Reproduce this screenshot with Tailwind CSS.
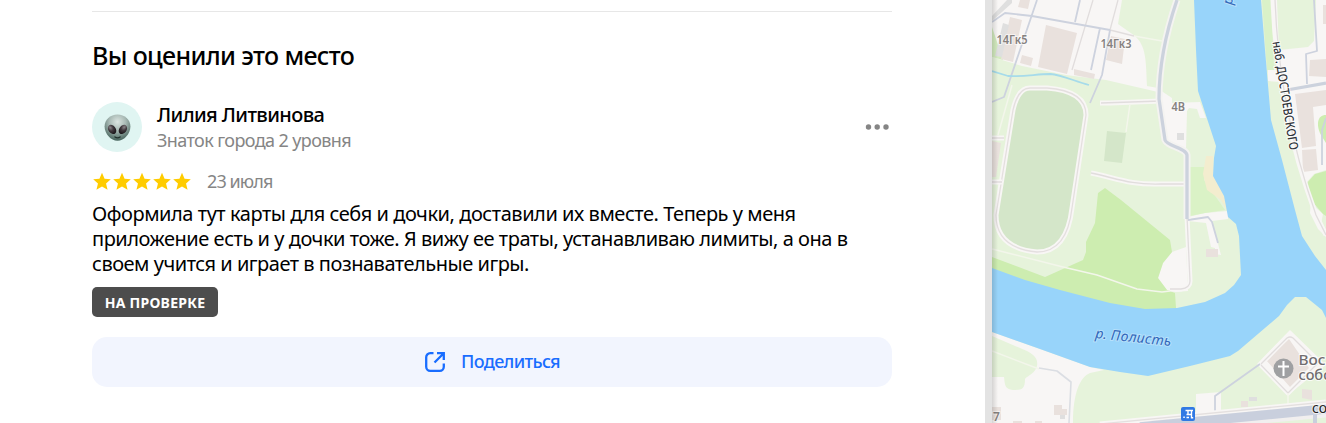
<!DOCTYPE html>
<html lang="ru">
	<head>
		<meta charset="UTF-8" />
		<meta name="viewport" content="width=device-width, initial-scale=1.0" />
		<title>Вы оценили это место</title>
		<script src="https://cdn.jsdelivr.net/npm/@tailwindcss/browser@4"></script>
	</head>
	<body class="flex h-[423px] w-[1326px] overflow-hidden bg-white font-['Noto_Sans',sans-serif] text-black">
		<!-- Review panel -->
		<main class="w-[985px] shrink-0 pl-[92px] pt-[11px]">
			<div class="w-[800px] border-t border-[#e7e7e7]">
				<h2 class="mt-[27px] whitespace-nowrap text-[25px] leading-8 font-medium tracking-[-0.62px]">Вы оценили это место</h2>

				<!-- Author -->
				<div class="mt-[31px] flex h-[50px] items-center">
					<div class="flex size-[50px] items-center justify-center rounded-full bg-[#e0f5f2]">
						<svg class="size-[27px]" viewBox="0 0 28 28">
							<defs>
								<radialGradient id="skin" cx="50%" cy="28%" r="70%">
									<stop offset="0" stop-color="#dce5e1" />
									<stop offset="0.45" stop-color="#a9bab5" />
									<stop offset="1" stop-color="#49675f" />
								</radialGradient>
								<radialGradient id="eye" cx="45%" cy="25%" r="70%">
									<stop offset="0" stop-color="#8b8589" />
									<stop offset="0.5" stop-color="#40383d" />
									<stop offset="1" stop-color="#1d181c" />
								</radialGradient>
							</defs>
							<path d="M14 .5C6.500.5 .6 6 .6 13c0 7.500 6.500 14.800 13.400 14.800S27.400 20.500 27.400 13C27.400 6 21.500.5 14 .5Z" fill="url(#skin)" />
							<ellipse cx="8.400" cy="16" rx="3.800" ry="5.200" transform="rotate(-38 8.400 16)" fill="url(#eye)" />
							<ellipse cx="19.600" cy="16" rx="3.800" ry="5.200" transform="rotate(38 19.600 16)" fill="url(#eye)" />
							<path d="M11.300 23.800q2.700 2 5.400 0" fill="none" stroke="#20302c" stroke-width="1.300" stroke-linecap="round" />
						</svg>
					</div>
					<div class="ml-[15px] grow whitespace-nowrap">
						<div class="text-[20px] leading-[26px] font-medium tracking-[-0.62px]">Лилия Литвинова</div>
						<div class="text-[18px] leading-[25px] tracking-[-0.6px] text-[#858585]">Знаток города 2 уровня</div>
					</div>
					<svg class="mr-[3px] h-[6px] w-[24px] fill-[#858585]" viewBox="0 0 24 6">
						<circle cx="3.500" cy="3" r="2.700" />
						<circle cx="12.200" cy="3" r="2.700" />
						<circle cx="21" cy="3" r="2.700" />
					</svg>
				</div>

				<!-- Rating -->
				<div class="mt-[17px] flex h-[25px] items-center">
					<svg class="h-[20px] w-[100px] fill-[#fc0]" viewBox="0 0 100 20">
						<defs>
							<path id="star" d="M10 .8l2.550 5.900 6.250.55-4.750 4.150 1.500 6.400L10 14.400l-5.550 3.400 1.500-6.400L1.200 7.250l6.250-.55Z" />
						</defs>
						<use href="#star" />
						<use href="#star" x="20" />
						<use href="#star" x="40" />
						<use href="#star" x="60" />
						<use href="#star" x="80" />
					</svg>
					<span class="ml-[15px] text-[18px] leading-[25px] tracking-[-0.9px] text-[#858585]">23 июля</span>
				</div>

				<p class="mt-[7px] whitespace-nowrap text-[20px] leading-[25px]">
					<span class="block tracking-[-0.45px]">Оформила тут карты для себя и дочки, доставили их вместе. Теперь у меня</span>
					<span class="block tracking-[-0.46px]">приложение есть и у дочки тоже. Я вижу ее траты, устанавливаю лимиты, а она в</span>
					<span class="block tracking-[-0.48px]">своем учится и играет в познавательные игры.</span>
				</p>

				<div class="mt-[11px] flex h-[30px] w-[126px] items-center justify-center rounded-[5px] bg-[#4d4d4d] text-[14px] font-bold tracking-[0.25px] whitespace-nowrap text-white">НА ПРОВЕРКЕ</div>

				<button class="mt-[20px] flex h-[50px] w-full items-center justify-center rounded-[15px] bg-[#f2f5fe] text-[#196dff]">
					<svg class="mr-[15px] size-[22px]" viewBox="0 0 22 22" fill="none" stroke="currentColor" stroke-width="2.300">
						<path d="M9.500 2.200H6.200a4 4 0 0 0-4 4v9.600a4 4 0 0 0 4 4h9.600a4 4 0 0 0 4-4v-3.300" />
						<path d="M10.500 11.500l9-9M13 2.200h6.800V9" />
					</svg>
					<span class="-mt-px text-[18px] font-medium tracking-[-0.65px]">Поделиться</span>
				</button>
			</div>
		</main>

		<div class="w-[7px] shrink-0 bg-[#e3e3e3]"></div>

		<!-- Map -->
		<svg class="h-[423px] w-[334px] shrink-0" viewBox="992 0 334 423" font-family="Noto Sans, sans-serif">
			<defs>
				<linearGradient id="edge">
					<stop offset="0" stop-color="#000" stop-opacity="0.14" />
					<stop offset="1" stop-color="#000" stop-opacity="0" />
				</linearGradient>
			</defs>
			<rect x="992" width="334" height="423" fill="#e6f3db" />

			<!-- Built-up land -->
			<g fill="#f8f6f5">
				<path d="M992 0H1122L1118 24 1135 36C1146 46 1146 60 1147 86L1158 88V92L1106 80 1066 75 1022 66 992 57Z" />
				<path d="M1160 90l12 8v5l28-1 6 16h-6l-3-9-8-1-2 3-1 38-18-7-9-44Z" />
				<path d="M1272 0h5l2 50 29-3 6-6 2-41h10v170l-12 4-8 9-16-50-9-51-13-1 0-11 10-1Z" />
				<path d="M992 332l48 17 50 18 14 3-14 3c-10 4-17 20-17 50h-81Z" />
				<path d="M1172 252l14-5 2 44-12 1-9-2-9-12 5-15ZM1188 217l17-4 23-2v8l-16 2 9 34-6-1 0-6-4-1-5-24-18-2Z" />
				<path d="M1290 330l36 35-12 9-26 21-31-31ZM1196 394l25-2v22h-25ZM1311 200l5 8 7 6-2 10 5 6v7l-8-8-8-16Z" />
			</g>
			<path d="M992 27L1003 60 992 57Z" fill="#d4ecc0" />
			<path d="M992 336l35 15c9 5 11 9 10 15-2 8-9 9-12 13 0 11-4 11-12 11-8-1-8-4-9-13H992Z" fill="#e6f3db" />

			<!-- Parks -->
			<path d="M992 257l53 20 38-17 3-8v-10l9-19 3-30 7-5 16 12 49 40 2 12-9 11-5 15 9 12 8 3 2 30h-80l-105-30Z" fill="#cdedb0" />
			<path d="M1190 167h17l-3 13 21 30-20 3-15 3Z" fill="#daf2c6" />
			<path d="M1206 156h7l1 19 11 23 3 14-7-12-14-10-4-16Z" fill="#f3edcf" />
			<path d="M1262 0h9l3 70h-7Z" fill="#daf1c8" />
			<path d="M1326 171l-11 3-8 9 4 17 12 14 3 2ZM1326 115c-9 0-10 10-5 20l5 8Z" fill="#cdedb0" />

			<!-- Buildings -->
			<g fill="#e9e1dd">
				<path d="M1020 0h10l-2 9-10-2ZM1010 17l12 3-9 42-12-3ZM1046 25l31 8-10 41-29-7ZM1022 55l11 3-2 8-11-3ZM1074 69l21 5-1 5-20-4ZM1111 36l14 3-3 25-16-4ZM992 141l9 2-5 34h-4ZM1323 5h3v19h-3ZM1310 60l16 -1v18l-17-1Z" />
				<path d="M1295 94l31-4v15l-13 2 3 39-14 2ZM1302 150l14-1 2 21-15 2ZM1206 249h12v8h-12ZM1266 360l23-21 20 29-19 19ZM1302 389l10 1v10l-10-2ZM1241 401h7v6h-7ZM992 407h9v13h-9ZM1054 405h8v4h5v6h-13ZM1013 421h9v2h-9ZM1035 421h7v2h-7Z" />
			</g>
			<path d="M992 16l15-16h5v3l-20 18ZM1003 23l6 2-7 32-7-1ZM1177 133h7v7h-7ZM1249 397h8v4h-8ZM1060 415h5v4h-5Z" fill="#dfdfdf" />

			<!-- Stadium -->
			<path d="M996 215L1013 110Q1018 88 1030 88H1047Q1086 91 1086 115L1072 208Q1067 252 1037 252 996 248 996 215Z" fill="#d4e6c9" stroke="#f8f6f5" stroke-width="5" />
			<path d="M996 215L1013 110Q1018 88 1030 88H1047Q1086 91 1086 115L1072 208Q1067 252 1037 252 996 248 996 215Z" fill="none" stroke="#e4dfdf" stroke-width="1.300" />
			<path d="M1107 131l19 2-4 30-18-2Z" fill="#d4e6c9" />

			<!-- Minor roads -->
			<g fill="none" stroke-linejoin="round">
				<path d="M1100 103h10l51-2M1091 173c25 5 38 12 70 11h25M992 138h12M992 182h10M1187 216l3 65q0 7-9 8h-11M1273 0q4 110 43 215l10 20M1261 364l29-30 28 29M1261 365l27 28 30-30" stroke="#f8f6f5" stroke-width="5" />
				<path d="M1101 103l60-2M1091 173c25 5 38 12 70 11h25M992 138h12M992 182h10M1187 216l3 65q0 7-9 8h-11M1275 0q4 110 41 215l10 20M1093 0l-21 70M1118 0l-8 30M1110 30l24 6M1261 364l26-26q3-2 6 0l25 25M1261 365l27 28 30-30" stroke="#e1dddd" stroke-width="1.300" />
				<path d="M992 249l71 18 34 8 40 14 25 3 8-1M992 351l47 18M1012 85l-14 50M1130 104l-4 28M1134 36l28 5M1288 393v15" stroke="#f3f6eb" stroke-width="1.500" />
				<path d="M992 22l13-9 27 3 78 14M1037 0l-33 97-12 5M1080 0l-5 22M1100 28l-9 42M1110 30l-8 45-12 28M1314 0l3 51-11 3 1 30M1322 165v-35l4-12M1188 220l20-3 4 5 6 21M1215 413v-17l45-32" stroke="#cdd2de" stroke-width="1.800" />
				<path d="M1039 368l18 3 14 11-2 41" stroke="#dbdee3" stroke-width="1.600" />
				<path d="M1177 0c-12 35-18 67-18 99l6 41c2 6 21 8 22 15v64" stroke="#f4f3f1" stroke-width="7" />
				<path d="M1177 0c-12 35-18 67-18 99l6 41c2 6 21 8 22 15v64M1287 90l39-7" stroke="#ccd2dd" stroke-width="3.300" />
				<path d="M992 71l16 5c15 1 29-2 42-2 12 1 24 7 39 11" stroke="#a6dbea" stroke-width="1.800" />
			</g>

			<!-- River -->
			<path d="M1194 0l2 50 2 41 18 55-2 12-1 18 11 20 4 21 8 7 3 12 2 39-7 10-9 8-20 9-28 6-32 1-35-6-50-13-35-10-33-12v64l48 17 50 18 30 5 28 4 42-10 40-10 8-5 41-35 8-11 8-8h11l16 13 4 8v-48l-11-14-13-20-7-26-13-50-11-40-6-70-4-50Z" fill="#98d4fa" />

			<!-- Highway -->
			<path d="M1100 426l226-22" fill="none" stroke="#f8f6f5" stroke-width="9" />
			<path d="M1100 424l226-22" fill="none" stroke="#e4e0df" stroke-width="1.300" />
			<path d="M1152 427l174-16" fill="none" stroke="#f1efef" stroke-width="13" />
			<path d="M1140 427l186-18" fill="none" stroke="#c9cfdd" stroke-width="9.500" />
			<path d="M1315 407v16" stroke="#c9cfdd" stroke-width="4" />

			<!-- Map labels -->
			<g font-size="12" fill="#85817f" stroke="#fff" stroke-width="2" stroke-opacity="0.6" paint-order="stroke" font-weight="600">
				<text x="996.500" y="44" textLength="31" lengthAdjust="spacingAndGlyphs">14Гк5</text>
				<text x="1100.500" y="47.500" textLength="31" lengthAdjust="spacingAndGlyphs">14Гк3</text>
				<text x="1171.500" y="111" textLength="13.500" lengthAdjust="spacingAndGlyphs">4В</text>
				<text x="993" y="420.500">7</text>
			</g>
			<g font-style="italic" fill="#3268ba" font-size="14" stroke="#b8e1fb" stroke-width="2" paint-order="stroke">
				<text transform="translate(1095 338) rotate(6)" textLength="76">р. Полисть</text>
				<text transform="translate(1232 5) rotate(-84)">р</text>
			</g>
			<text transform="translate(1272.500 42) rotate(81)" font-size="12.500" font-weight="500" textLength="110" lengthAdjust="spacingAndGlyphs" fill="#30343a" stroke="#fff" stroke-width="2" stroke-opacity="0.8" paint-order="stroke">наб. ДОСТОЕВСКОГО</text>
			<circle cx="1283.500" cy="368.500" r="10" fill="#9fa0a2" />
			<path d="M1283.500 361v15M1278 366.500h11" stroke="#fff" stroke-width="2" />
			<g font-size="14.500" fill="#716d70" font-weight="500" stroke="#fff" stroke-width="2" stroke-opacity="0.8" paint-order="stroke">
				<text x="1298.500" y="365" textLength="27" lengthAdjust="spacingAndGlyphs">Вос</text>
				<text x="1298.500" y="380">собо</text>
			</g>
			<text x="1312" y="413" font-size="14" fill="#222" stroke="#fff" stroke-width="2" stroke-opacity="0.7" paint-order="stroke">со</text>
			<rect x="1181" y="407" width="14" height="14" rx="2" fill="#3079e4" />
			<path d="M1185.500 410.500h7.500M1188 410.500v4M1191.500 410.500v7.300h1.700M1186.500 414.500h5M1183.300 417.200h1.500M1186.500 417.500h2.500" fill="none" stroke="#fff" stroke-width="1.400" />
			<rect x="992" width="6" height="423" fill="url(#edge)" />
		</svg>
	</body>
</html>
